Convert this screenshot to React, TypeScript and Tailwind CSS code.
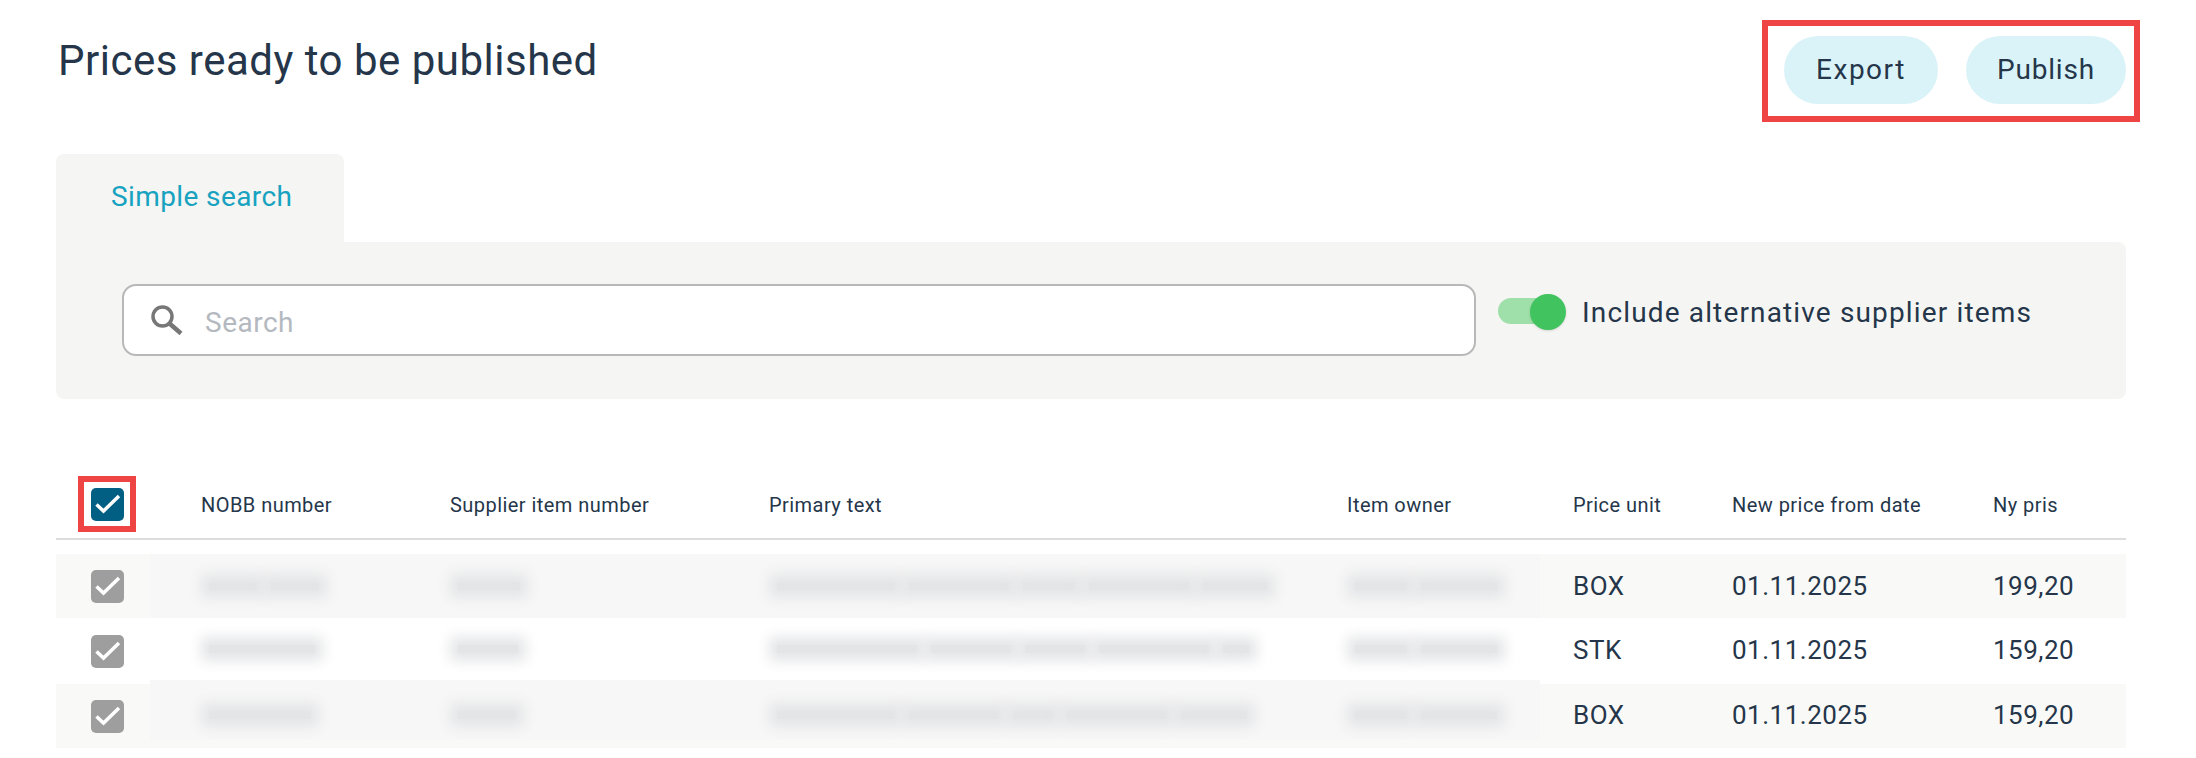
import React from "react";

const rows = [
  {
    unit: "BOX",
    date: "01.11.2025",
    price: "199,20",
    blur: [[58, 58], [72], [128, 110, 62, 110, 74], [62, 86]],
  },
  {
    unit: "STK",
    date: "01.11.2025",
    price: "159,20",
    blur: [[116], [70], [150, 90, 70, 120, 36], [62, 86]],
  },
  {
    unit: "BOX",
    date: "01.11.2025",
    price: "159,20",
    blur: [[112], [68], [128, 100, 50, 110, 76], [62, 86]],
  },
];

function Checkmark() {
  return (
    <svg viewBox="0 0 33 33" className="w-[33px] h-[33px]" fill="none">
      <path d="M5.5 16.5l7 6.5L28 8" stroke="white" strokeWidth="3.5" />
    </svg>
  );
}

// redacted cell: soft smudge made from a box-shadow
function BlurCell({ parts }: { parts: number[] }) {
  return (
    <div className="flex gap-[14px] pl-[8px]">
      {parts.map((w, i) => (
        <div
          key={i}
          className="h-[8px] bg-[#e4e5e7] shadow-[0_0_14px_8px_#e4e5e7]"
          style={{ width: w - 10 }}
        />
      ))}
    </div>
  );
}

export default function App() {
  return (
    <div className="w-[2196px] h-[758px] bg-white pl-[56px] pr-[70px] pt-[20px] font-['Roboto',sans-serif] text-[#25364a] overflow-hidden">
      <div className="flex justify-between items-start h-[102px]">
        <h1 className="text-[42px] leading-[46px] mt-[18px] ml-[2px] font-normal tracking-[0.5px]">
          Prices ready to be published
        </h1>
        <div className="flex gap-[28px] border-[6px] border-[#ef4444] h-[102px] pl-[16px] pt-[10px] pr-[8px] -mr-[14px]">
          <button className="w-[154px] h-[68px] rounded-[34px] bg-[#daf3f8] text-[28px] tracking-[1.5px]">
            Export
          </button>
          <button className="w-[160px] h-[68px] rounded-[34px] bg-[#daf3f8] text-[28px] tracking-[0.8px]">
            Publish
          </button>
        </div>
      </div>

      <div className="mt-[32px] w-[288px] h-[88px] bg-[#f5f5f3] rounded-t-lg pl-[55px] pt-[26px] text-[28px] leading-[34px] tracking-[0.4px] text-[#17a2c0]">
        Simple search
      </div>
      <div className="h-[157px] bg-[#f5f5f3] rounded-b-lg rounded-tr-lg pl-[66px] pt-[42px] flex items-start">
        <div className="w-[1354px] h-[72px] bg-white border-2 border-[#b8b8b8] rounded-[14px] flex items-center pl-[26px]">
          <svg viewBox="0 0 33 30" className="w-[33px] h-[30px]" fill="none">
            <circle cx="12.5" cy="11.5" r="9.5" stroke="#777777" strokeWidth="3.5" />
            <path d="M19.5 18.5L31 28.5" stroke="#777777" strokeWidth="4.5" />
          </svg>
          <span className="ml-[22px] mt-[5px] text-[28px] tracking-[0.5px] text-[#b4b9c0]">
            Search
          </span>
        </div>
        <div className="relative ml-[22px] mt-[10px] w-[68px] h-[36px]">
          <div className="absolute left-0 top-[4px] w-[50px] h-[26px] rounded-full bg-[#9fdfa9]" />
          <div className="absolute right-0 top-0 w-[36px] h-[36px] rounded-full bg-[#41c45f] shadow-sm" />
        </div>
        <span className="ml-[16px] mt-[12px] text-[28px] leading-[34px] tracking-[1.15px]">
          Include alternative supplier items
        </span>
      </div>

      <div className="mt-[77px]">
        <div className="grid grid-cols-[145px_249px_319px_578px_226px_159px_261px_133px] items-center h-[64px] border-b-2 border-[#dcdcdc] text-[20px] tracking-[0.45px]">
          <div className="pl-[22px] self-start">
            <div className="w-[58px] h-[56px] border-[6px] border-[#ef4444] flex items-center justify-center">
              <div className="w-[33px] h-[33px] rounded-[5px] bg-[#005f83]">
                <Checkmark />
              </div>
            </div>
          </div>
          <div className="-mt-[4px]">NOBB number</div>
          <div className="-mt-[4px]">Supplier item number</div>
          <div className="-mt-[4px]">Primary text</div>
          <div className="-mt-[4px]">Item owner</div>
          <div className="-mt-[4px]">Price unit</div>
          <div className="-mt-[4px]">New price from date</div>
          <div className="-mt-[4px]">Ny pris</div>
        </div>

        <div className="mt-[14px]">
          {rows.map((row, i) => (
            <div
              key={i}
              className={
                i === 1
                  ? "flex h-[66px] items-center"
                  : "flex h-[64px] items-center bg-[#f9f9f7]"
              }
            >
              <div className="w-[94px] pl-[35px]">
                <div className="w-[33px] h-[33px] rounded-[5px] bg-[#9e9e9e]">
                  <Checkmark />
                </div>
              </div>
              <div
                className={
                  i === 0
                    ? "w-[1390px] h-[64px] bg-[#f7f7f7] pl-[51px] grid grid-cols-[249px_319px_578px_152px] items-center"
                    : i === 1
                      ? "w-[1390px] h-[62px] self-start pl-[51px] grid grid-cols-[249px_319px_578px_152px] items-center"
                      : "w-[1390px] h-[60px] self-start -mt-[4px] pt-[10px] bg-[#f7f7f7] pl-[51px] grid grid-cols-[249px_319px_578px_152px] items-center"
                }
              >
                {row.blur.map((parts, j) => (
                  <BlurCell key={j} parts={parts} />
                ))}
              </div>
              <div
                className={
                  i === 0
                    ? "grid grid-cols-[159px_261px_133px] pl-[33px] text-[26px] tracking-[0.5px]"
                    : "grid grid-cols-[159px_261px_133px] pl-[33px] -mt-[2px] text-[26px] tracking-[0.5px]"
                }
              >
                <div>{row.unit}</div>
                <div>{row.date}</div>
                <div>{row.price}</div>
              </div>
            </div>
          ))}
        </div>
      </div>
    </div>
  );
}
